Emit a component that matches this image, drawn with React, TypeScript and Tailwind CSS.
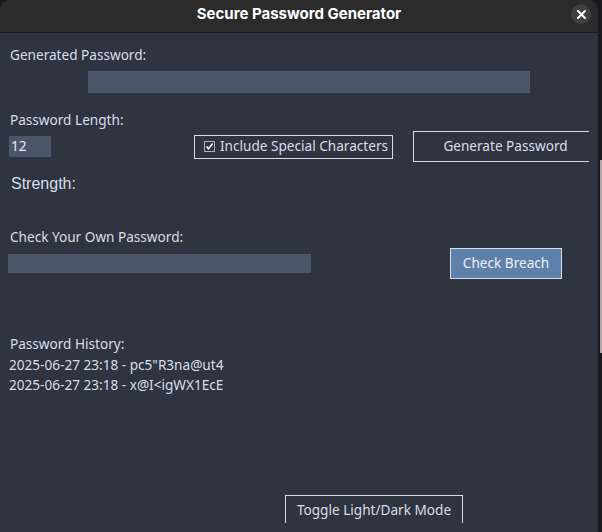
import React from "react";

const history = [
  "2025-06-27 23:18 - pc5\"R3na@ut4",
  "2025-06-27 23:18 - x@I<igWX1EcE",
];

function TitleBar() {
  return (
    <div className="grid h-[33px] shrink-0 grid-cols-[1fr_auto_1fr] border-b border-[#1c1c1c] bg-[#2b2b2b] pb-[4px]">
      <div />
      <div className="flex items-center text-[15px] font-bold text-white [font-family:Inter,'Noto_Sans',sans-serif]">
        Secure Password Generator
      </div>
      <div className="flex items-center justify-end pr-[7px]">
        <button className="flex h-[20px] w-[20px] items-center justify-center rounded-full bg-[#404040]">
          <svg width="9" height="9" viewBox="0 0 9 9">
            <path d="M1 1 L8 8 M8 1 L1 8" stroke="#ffffff" strokeWidth="2" strokeLinecap="round" />
          </svg>
        </button>
      </div>
    </div>
  );
}

function Label({ children }: { children: React.ReactNode }) {
  return <div className="pl-[10px] leading-[18px]">{children}</div>;
}

export default function App() {
  return (
    <div className="flex h-[532px] w-[602px] overflow-hidden bg-[#18181d]">
      <div className="flex w-[598px] shrink-0 flex-col overflow-hidden rounded-t-[10px] bg-[#2e3440]">
        <TitleBar />
        <div className="flex h-[490px] w-[589px] flex-col overflow-hidden text-[13.6px] text-[#d8dee9] [font-family:'Noto_Sans',sans-serif]">
          <div className="mt-[13px]">
            <Label>Generated Password:</Label>
          </div>
          <div className="mt-[7px] ml-[88px] h-[22px] w-[442px] shrink-0 bg-[#4c566a]" />

          <div className="mt-[18px]">
            <Label>Password Length:</Label>
          </div>
          <div className="mt-[2px] flex h-[31px] shrink-0 items-center">
            <div className="ml-[9px] flex h-[21px] w-[42px] shrink-0 items-center bg-[#4c566a] pl-[2px] text-[#e5e9f0]">
              12
            </div>
            <label className="ml-[143px] flex h-[24px] w-[199px] shrink-0 items-center border border-[#d8dee9] pl-[9px]">
              <svg width="11" height="11" viewBox="0 0 11 11" className="shrink-0">
                <rect x="0.5" y="0.5" width="10" height="10" fill="#2e3440" stroke="#aeb4be" />
                <path d="M2.5 5.5 L4.5 7.8 L8.7 2.6" fill="none" stroke="#ffffff" strokeWidth="1.6" />
              </svg>
              <span className="ml-[5px] whitespace-nowrap">Include Special Characters</span>
            </label>
            <button className="ml-[20px] flex h-[31px] w-[185px] shrink-0 items-center justify-center border border-[#d8dee9] whitespace-nowrap">
              Generate Password
            </button>
          </div>

          <div className="mt-[13px] pl-[11px] text-[16px] leading-[18px] [font-family:'Liberation_Sans',Arial,sans-serif]">
            Strength:
          </div>

          <div className="mt-[35px]">
            <Label>Check Your Own Password:</Label>
          </div>
          <div className="mt-[2px] flex h-[31px] shrink-0 items-center">
            <div className="ml-[8px] h-[19px] w-[303px] shrink-0 bg-[#4c566a]" />
            <button className="ml-[139px] flex h-[31px] w-[112px] shrink-0 items-center justify-center border border-[#d8dee9] bg-[#5e81ac] text-[#eceff4]">
              Check Breach
            </button>
          </div>

          <div className="mt-[56px]">
            <Label>Password History:</Label>
          </div>
          <div className="mt-[2px] flex flex-col pl-[9px]">
            {history.map((h) => (
              <div key={h} className="leading-[20px] whitespace-nowrap">
                {h}
              </div>
            ))}
          </div>

          <button className="mt-[100px] ml-[285px] flex h-[31px] w-[178px] shrink-0 items-center justify-center border border-[#d8dee9] whitespace-nowrap">
            Toggle Light/Dark Mode
          </button>
        </div>
      </div>
      <div className="flex w-[4px] flex-col">
        <div className="h-[160px]" />
        <div className="flex h-[193px]">
          <div className="w-[2px] bg-[#18181d]" />
          <div className="w-[2px] bg-[#b9a4a4]" />
        </div>
      </div>
    </div>
  );
}
